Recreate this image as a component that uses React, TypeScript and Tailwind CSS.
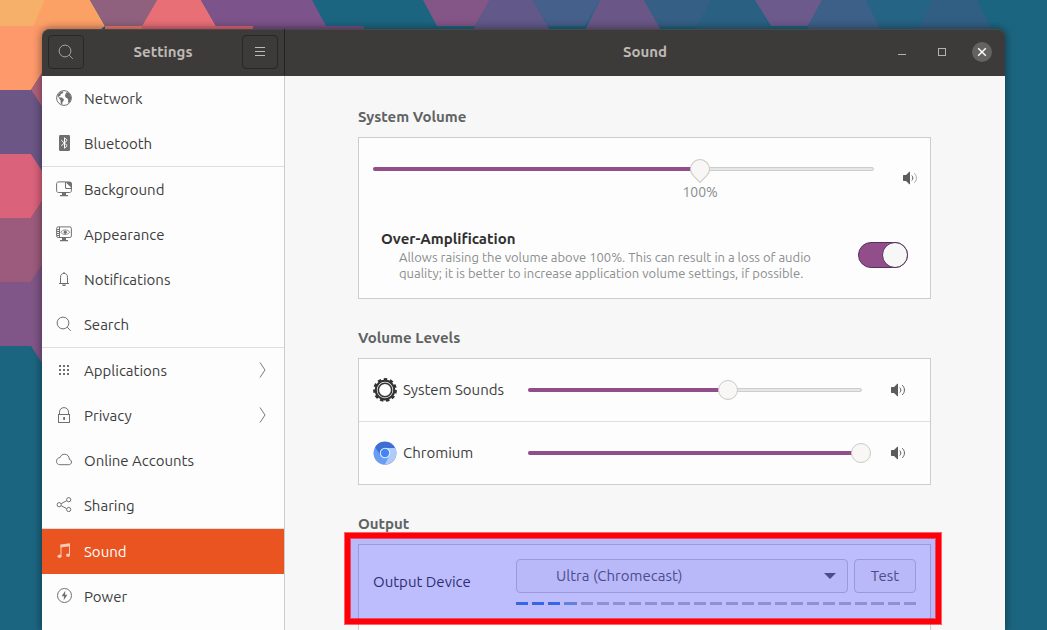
import { ReactNode, useState } from "react";

type NavItem = {
    id: string;
    label: string;
    icon: ReactNode;
    hasSubmenu?: boolean;
};

const svgProps = {
    width: 16,
    height: 16,
    viewBox: "0 0 16 16",
    fill: "none",
    stroke: "currentColor",
    "aria-hidden": true,
};

const SearchIcon = () => (
    <svg {...svgProps}>
        <circle cx="7" cy="7" r="5.900" />
        <path d="M11.200 11.200 14.800 14.800" />
    </svg>
);

const NetworkIcon = () => (
    <svg {...svgProps}>
        <circle cx="8" cy="8" r="7.400" />
        <path
            fill="currentColor"
            stroke="none"
            d="M1.500 5.200 4 2.400 6.600 1.200 7.400 2.200 6.400 3.600 4.800 3.900 4.600 5.400 3 6.200 3.400 7.400 6 7.600 8 9.400 7.200 11.400 6.400 12 6.200 14.600 4.800 13.800 4.600 10.600 3.200 8.600ZM9.400 4.200 10.400 2.200 12.400 2.400 14.400 4.800 15.200 8 14.400 11 13 12.800 12 12.400 12.200 10 11.400 8.200 9.600 7.600 9 5.800Z"
        />
    </svg>
);

const BluetoothIcon = () => (
    <svg {...svgProps}>
        <rect x="3" y="0" width="11" height="16" rx="1.200" fill="currentColor" stroke="none" />
        <path stroke="#fdfdfd" d="M5.300 5.200 11.200 10.600 8.500 13.200V2.800L11.200 5.400 5.300 10.800" />
    </svg>
);

const BackgroundIcon = () => (
    <svg {...svgProps}>
        <path d="M9 .9H2.400C1.400.9.6 1.600.6 2.600v7.200c0 1 .8 1.700 1.800 1.700h11.200c1 0 1.800-.7 1.800-1.700V7" />
        <path fill="currentColor" stroke="none" d="M9 .4h4.400c1.500 0 2.600 1 2.600 2.600V8h-5.400C9.600 8 9 7.400 9 6.400Z" />
        <path fill="#fdfdfd" stroke="none" d="M10 1.600 14.800 6.200V7h-4c-.6 0-.8-.3-.8-.8Z" />
        <path fill="currentColor" stroke="none" d="M6 12h4v2h2v1.300H4V14h2Z" />
    </svg>
);

const AppearanceIcon = () => (
    <svg {...svgProps}>
        <rect x=".6" y=".9" width="14.800" height="10.600" rx="1.600" />
        <path d="M3.500 1v10.500M1 3.500h2M1 5.500h2M1 7.500h2M1 9.500h2" />
        <path strokeWidth=".8" d="M4.800 6.200C6.500 3.200 11.500 3.200 13.800 6.200 11.500 9.200 6.500 9.200 4.800 6.200Z" />
        <circle cx="9.200" cy="6.200" r="1.200" fill="currentColor" />
        <path fill="currentColor" stroke="none" d="M6 12h4v2h2v1.300H4V14h2Z" />
    </svg>
);

const BellIcon = () => (
    <svg {...svgProps}>
        <path d="M3 12.500h10M4.500 12.300V6.200C4.500 3.800 6 2.300 8 2.300s3.500 1.500 3.500 3.900v6.100M8 1v1.300" />
        <path fill="currentColor" stroke="none" d="M6 13.400h4c-.2 1.100-1 1.600-2 1.600s-1.800-.5-2-1.600Z" />
    </svg>
);

const AppsIcon = () => (
    <svg {...svgProps}>
        <path fill="currentColor" stroke="none" d="M3 3h2v2H3zM7 3h2v2H7zM11 3h2v2h-2zM3 7h2v2H3zM7 7h2v2H7zM11 7h2v2h-2zM3 11h2v2H3zM7 11h2v2H7zM11 11h2v2h-2z" />
    </svg>
);

const LockIcon = () => (
    <svg {...svgProps}>
        <rect x="2.500" y="7.500" width="11" height="8" />
        <path d="M3.500 7.500V5.200C3.500 2.500 5.400.6 8 .6s4.500 1.900 4.500 4.600v2.300" />
        <path fill="currentColor" stroke="none" d="M7.200 10H9v3H7.200z" />
    </svg>
);

const CloudIcon = () => (
    <svg {...svgProps}>
        <path d="M3.800 12.700h8.800c1.700 0 2.900-1.200 2.900-2.700 0-1.400-.9-2.400-2.200-2.600.1-3-1.900-5.200-4.700-5.200-2.200 0-3.900 1.300-4.500 3.300C2 5.700.5 7.300.5 9.300c0 2 1.400 3.400 3.300 3.400Z" />
    </svg>
);

const ShareIcon = () => (
    <svg {...svgProps}>
        <circle cx="3.200" cy="7.700" r="2.100" />
        <circle cx="12.700" cy="2.700" r="2.100" />
        <circle cx="12.700" cy="12.500" r="2.100" />
        <path d="M5.200 6.700 10.700 3.700M5.200 8.700l5.500 2.900" />
    </svg>
);

const MusicIcon = () => (
    <svg {...svgProps}>
        <path d="M5 13V2M13.500 12V1" />
        <path fill="currentColor" stroke="none" d="M4.500 1.500 14 .3v3L4.500 4.500Z" />
        <ellipse cx="3.500" cy="13.300" rx="2" ry="1.700" fill="currentColor" stroke="none" />
        <ellipse cx="12" cy="12.200" rx="2" ry="1.700" fill="currentColor" stroke="none" />
    </svg>
);

const PowerIcon = () => (
    <svg {...svgProps}>
        <circle cx="8.500" cy="7.500" r="7" />
        <path fill="currentColor" stroke="none" d="M9.300 2.800 5.600 8.300H8L7.700 12.200 11.400 6.700H9Z" />
    </svg>
);

const ChevronIcon = () => (
    <svg width="7" height="16" viewBox="0 0 7 16" fill="none" stroke="currentColor" aria-hidden="true">
        <path d="M1 .5 6 8 1 15.500" />
    </svg>
);

const SpeakerIcon = ({ low = false }: { low?: boolean }) => (
    <svg {...svgProps} className="shrink-0 text-[#5e5c5a]">
        <path fill="currentColor" stroke="none" d="M1.500 5H4l3.300-3.200H8v12.500h-.7L4 11H1.500L1 10.500v-5Z" />
        <path d="M9.800 5.500c1.400 1.600 1.400 3.500 0 5" />
        <path opacity={low ? 0.5 : 1} d="M12.200 3.200c3 2.600 3 7 0 9.700" />
    </svg>
);

const GearIcon = () => (
    <svg width="24" height="24" viewBox="0 0 24 24" fill="none" aria-hidden="true">
        <circle cx="12" cy="12" r="10.700" stroke="#333" strokeWidth="2.400" strokeDasharray="3.400 2.712" />
        <circle cx="12" cy="12" r="9.300" stroke="#333" strokeWidth="2.200" />
        <circle cx="12" cy="12" r="6.700" stroke="#333" strokeWidth="1.600" />
    </svg>
);

const ChromiumIcon = () => (
    <svg width="24" height="24" viewBox="0 0 24 24" fill="none" aria-hidden="true">
        <circle cx="12" cy="12.400" r="11.400" fill="#b9b9b9" />
        <circle cx="12" cy="12" r="11.400" fill="#669df6" />
        <path fill="#3f6dd4" d="M2.100 6.300A11.400 11.400 0 0 1 21.900 6.900H12L7.600 14.600Z" />
        <path fill="#aecbfa" d="M12 6.900h10.200A11.400 11.400 0 0 1 11.800 23.400L16.400 14.600Z" />
        <circle cx="12" cy="12" r="5.200" fill="#e8f0fe" />
        <circle cx="12" cy="12" r="4.200" fill="#4285f4" />
    </svg>
);

const navGroups: NavItem[][] = [
    [
        { id: "network", label: "Network", icon: <NetworkIcon /> },
        { id: "bluetooth", label: "Bluetooth", icon: <BluetoothIcon /> },
    ],
    [
        { id: "background", label: "Background", icon: <BackgroundIcon /> },
        { id: "appearance", label: "Appearance", icon: <AppearanceIcon /> },
        { id: "notifications", label: "Notifications", icon: <BellIcon /> },
        { id: "search", label: "Search", icon: <SearchIcon /> },
    ],
    [
        { id: "applications", label: "Applications", icon: <AppsIcon />, hasSubmenu: true },
        { id: "privacy", label: "Privacy", icon: <LockIcon />, hasSubmenu: true },
        { id: "accounts", label: "Online Accounts", icon: <CloudIcon /> },
        { id: "sharing", label: "Sharing", icon: <ShareIcon /> },
    ],
    [
        { id: "sound", label: "Sound", icon: <MusicIcon /> },
        { id: "power", label: "Power", icon: <PowerIcon /> },
    ],
];

const wallpaperTiles = [
    { points: "0,0 90,0 105,26 0,26", fill: "#fca166" },
    { points: "0,0 45,0 33,26 0,26", fill: "#f6b069" },
    { points: "90,0 157,0 142,26 105,26", fill: "#8f617f" },
    { points: "157,0 201,0 216,26 142,26", fill: "#e86f76" },
    { points: "201,0 312,0 326,26 216,26", fill: "#7c538a" },
    { points: "105,26 142,26 145,40 105,40", fill: "#ee7b6d" },
    { points: "142,26 253,26 260,40 142,40", fill: "#df6577" },
    { points: "253,26 363,26 370,40 253,40", fill: "#774f88" },
    { points: "423,0 490,0 475,26 437,26", fill: "#845587" },
    { points: "490,0 533,0 550,30 473,30", fill: "#62598a" },
    { points: "533,0 600,0 585,26 548,26", fill: "#45608a" },
    { points: "600,0 644,0 661,30 585,30", fill: "#6a5788" },
    { points: "644,0 711,0 697,26 659,26", fill: "#365f86" },
    { points: "711,0 755,0 771,30 695,30", fill: "#2a6183" },
    { points: "755,0 822,0 808,26 771,26", fill: "#6d5a8c" },
    { points: "822,0 866,0 881,30 806,30", fill: "#3c6088" },
    { points: "866,0 932,0 918,30 881,30", fill: "#256484" },
    { points: "932,0 977,0 992,30 918,30", fill: "#315f84" },
    { points: "0,26 105,26 60,60 42,73 31,90 0,90", fill: "#fd996a" },
    { points: "48,64 31,90 48,116", fill: "#b16078" },
    { points: "0,90 31,90 48,116 48,180 31,154 0,154", fill: "#6b5685" },
    { points: "0,154 31,154 48,180 48,192 31,218 0,218", fill: "#da627b" },
    { points: "0,218 31,218 48,192 48,256 31,282 0,282", fill: "#9c5b7c" },
    { points: "0,282 31,282 48,256 48,372 31,346 0,346", fill: "#805587" },
];

function Wallpaper() {
    return (
        <svg
            className="absolute inset-0 h-full w-full"
            viewBox="0 0 1047 630"
            preserveAspectRatio="xMinYMin slice"
            aria-hidden="true"
        >
            <rect width="1047" height="630" fill="#1c6581" />
            {wallpaperTiles.map((tile) => (
                <polygon key={tile.points} points={tile.points} fill={tile.fill} />
            ))}
        </svg>
    );
}

type SliderProps = {
    label: string;
    max: number;
    initial: number;
    mark?: string;
};

function Slider({ label, max, initial, mark }: SliderProps) {
    const [value, setValue] = useState<number>(initial);
    const percent = `${(value / max) * 100}%`;
    const thumbShape = mark
        ? "[&::-webkit-slider-thumb]:rotate-45 [&::-webkit-slider-thumb]:rounded-br-none"
        : "";

    return (
        <div className="relative h-1 flex-1 rounded-full border border-[#cdcdcd] bg-[#e6e6e6]">
            <div className="absolute -top-px -bottom-px -left-px rounded-full bg-[#924d8b]" style={{ width: percent }} />
            <input
                type="range"
                aria-label={label}
                min={0}
                max={max}
                value={value}
                onChange={(e) => setValue(Number(e.target.value))}
                className={`absolute -inset-x-2.5 -top-[9px] h-5 cursor-pointer appearance-none bg-transparent [&::-webkit-slider-thumb]:size-5 [&::-webkit-slider-thumb]:appearance-none [&::-webkit-slider-thumb]:rounded-full [&::-webkit-slider-thumb]:border [&::-webkit-slider-thumb]:border-[#cdc9c5] [&::-webkit-slider-thumb]:bg-[#f8f7f6] ${thumbShape}`}
            />
            {mark && (
                <span
                    className="absolute top-3.5 -translate-x-1/2 text-sm leading-5 text-[#8b8e8f]"
                    style={{ left: percent }}
                >
                    {mark}
                </span>
            )}
        </div>
    );
}

function Section({ title, children }: { title: string; children: ReactNode }) {
    return (
        <section>
            <h2 className="mb-2.5 text-[15px] leading-5 font-bold text-[#5f6364]">{title}</h2>
            {children}
        </section>
    );
}

function Sidebar() {
    const [active, setActive] = useState<string>("sound");

    return (
        <nav className="w-[243px] shrink-0 divide-y divide-[#dedede] border-r border-[#cdcdcd] bg-[#fdfdfd]">
            {navGroups.map((group) => (
                <ul key={group[0].id}>
                    {group.map((item) => (
                        <li key={item.id}>
                            <button
                                onClick={() => setActive(item.id)}
                                className={`flex h-[45px] w-full items-center gap-3 pr-[18px] pl-3.5 text-left text-[15px] leading-5 ${
                                    active === item.id ? "bg-[#e95420] text-white" : "text-[#3d3d3d]"
                                }`}
                            >
                                <span className={`pb-px ${active === item.id ? "text-[#fbc9b5]" : "text-[#707070]"}`}>
                                    {item.icon}
                                </span>
                                <span className="flex-1">{item.label}</span>
                                {item.hasSubmenu && (
                                    <span className="pb-px text-[#7a7a7a]">
                                        <ChevronIcon />
                                    </span>
                                )}
                            </button>
                        </li>
                    ))}
                </ul>
            ))}
        </nav>
    );
}

function HeaderBar() {
    return (
        <header className="flex h-[47px] shrink-0 rounded-t-lg bg-[#3d3b39] pb-px text-[15px] font-bold text-[#bdb9b4] shadow-[inset_0_1px_0_#4b4946]">
            <div className="flex w-[243px] shrink-0 items-center justify-between border-r border-[#242321] px-1.5">
                <button aria-label="Search" className="flex h-[34px] w-9 items-center justify-center rounded border border-[#282725] text-[#a5a29e]">
                    <SearchIcon />
                </button>
                <h1>Settings</h1>
                <button aria-label="Menu" className="flex h-[34px] w-9 items-center justify-center rounded border border-[#282725] text-[#bdb9b4]">
                    <svg {...svgProps}>
                        <path d="M3 3.500h10M3 7.500h10M3 11.500h10" />
                    </svg>
                </button>
            </div>
            <div className="grid flex-1 grid-cols-[1fr_auto_1fr] items-center px-[13px]">
                <h1 className="col-start-2">Sound</h1>
                <div className="flex items-center justify-end gap-5 text-[#b5b1ac]">
                    <button aria-label="Minimize" className="flex size-5 items-center justify-center">
                        <svg {...svgProps}>
                            <path d="M4 10.500h8" />
                        </svg>
                    </button>
                    <button aria-label="Maximize" className="flex size-5 items-center justify-center">
                        <svg {...svgProps}>
                            <rect x="4.500" y="4.500" width="7" height="7" />
                        </svg>
                    </button>
                    <button aria-label="Close" className="flex size-5 items-center justify-center rounded-full bg-[#656361] text-white">
                        <svg {...svgProps}>
                            <path strokeWidth="1.400" d="m4.200 4.200 7.600 7.600m0-7.600-7.600 7.600" />
                        </svg>
                    </button>
                </div>
            </div>
        </header>
    );
}

const apps = [
    { name: "System Sounds", icon: <GearIcon />, value: 60 },
    { name: "Chromium", icon: <ChromiumIcon />, value: 100 },
];

const LEVEL_COUNT = 25;

function SoundPanel() {
    const [overAmplify, setOverAmplify] = useState<boolean>(true);

    return (
        <main className="flex flex-1 flex-col gap-[29px] overflow-hidden bg-[#f7f7f7] pt-[31px] pr-[74px] pl-[73px]">
            <Section title="System Volume">
                <div className="border border-[#cdcdcd] bg-[#fdfdfd] pb-[17px]">
                    <div className="flex items-start gap-7 pt-[29px] pr-3 pl-3.5">
                        <Slider label="System Volume" max={153} initial={100} mark="100%" />
                        <div className="pt-[3px]">
                            <SpeakerIcon low />
                        </div>
                    </div>
                    <div className="flex items-center justify-between px-[22px] pt-[43px]">
                        <div>
                            <label htmlFor="over-amp" className="block text-[15px] leading-5 font-bold text-[#303030]">
                                Over-Amplification
                            </label>
                            <p className="max-w-[456px] pl-[18px] text-[13px] leading-4 text-[#8b8e8f]">
                                Allows raising the volume above 100%. This can result in a loss of audio quality; it is
                                better to increase application volume settings, if possible.
                            </p>
                        </div>
                        <input
                            id="over-amp"
                            type="checkbox"
                            role="switch"
                            checked={overAmplify}
                            onChange={(e) => setOverAmplify(e.target.checked)}
                            className="flex h-[26px] w-[50px] shrink-0 appearance-none items-center rounded-full border border-[#56305a] bg-[#c9c9c9] before:-mx-px before:block before:size-[26px] before:rounded-full before:border before:border-[#56305a] before:bg-[#f7f7f7] checked:justify-end checked:bg-[#924d8b]"
                        />
                    </div>
                </div>
            </Section>

            <Section title="Volume Levels">
                <ul className="divide-y divide-[#dedede] border border-[#cdcdcd] bg-[#fdfdfd]">
                    {apps.map((app) => (
                        <li key={app.name} className="flex h-[63px] items-center pr-6 pl-3.5 last:h-[62px]">
                            {app.icon}
                            <span className="ml-1.5 w-[125px] text-[15px] text-[#3d3d3d]">{app.name}</span>
                            <Slider label={app.name} max={100} initial={app.value} />
                            <div className="ml-7">
                                <SpeakerIcon />
                            </div>
                        </li>
                    ))}
                </ul>
            </Section>

            <Section title="Output">
                <div className="relative">
                    <div className="h-40 border border-[#cdcdcd] bg-[#fdfdfd] px-3.5 pt-3.5">
                        <div className="flex items-center">
                            <label htmlFor="output-device" className="w-[143px] text-[15px] text-[#3d3d3d]">
                                Output Device
                            </label>
                            <div className="flex-1">
                                <div className="flex gap-1.5 text-[15px] text-[#666]">
                                    <div className="relative flex-1">
                                        <select
                                            id="output-device"
                                            className="h-[34px] w-full appearance-none rounded border border-[#cdcdcd] bg-[#f7f7f7] pr-8 pl-[39px]"
                                        >
                                            <option>Ultra (Chromecast)</option>
                                        </select>
                                        <svg
                                            className="pointer-events-none absolute top-3.5 right-3 text-[#666]"
                                            width="12"
                                            height="6"
                                            viewBox="0 0 12 6"
                                            fill="currentColor"
                                            aria-hidden="true"
                                        >
                                            <path d="M0 0h12L6 6Z" />
                                        </svg>
                                    </div>
                                    <button className="h-[34px] w-[62px] rounded border border-[#cdcdcd] bg-[#f7f7f7]">
                                        Test
                                    </button>
                                </div>
                                <div className="mt-[9px] flex gap-1">
                                    {Array.from({ length: LEVEL_COUNT }, (_, i) => (
                                        <span
                                            key={i}
                                            className={`h-[3px] flex-1 ${
                                                i < 3 ? "bg-[#458bd8]" : i === 3 ? "bg-[#86abd0]" : "bg-[#c1bfc0]"
                                            }`}
                                        />
                                    ))}
                                </div>
                            </div>
                        </div>
                    </div>
                    {/* highlight box over the output row */}
                    <div className="pointer-events-none absolute -top-[11px] -right-2.5 -left-[13px] h-[91px] border-5 border-[#ff0009] bg-[#0000ff]/25 bg-clip-padding shadow-[0_0_0_1px_rgba(255,0,9,0.6),inset_0_0_0_1px_rgba(255,0,9,0.6)]" />
                </div>
            </Section>
        </main>
    );
}

export default function App() {
    return (
        <div className="relative flex h-screen flex-col overflow-hidden bg-[#1c6581] font-['Ubuntu','Noto_Sans',sans-serif]">
            <Wallpaper />
            <div className="relative mx-[42px] mt-[29px] flex min-h-0 flex-1 flex-col rounded-t-lg shadow-[0_0_8px_1px_rgba(0,0,0,0.4)]">
                <HeaderBar />
                <div className="flex min-h-0 flex-1 overflow-hidden">
                    <Sidebar />
                    <SoundPanel />
                </div>
            </div>
        </div>
    );
}
